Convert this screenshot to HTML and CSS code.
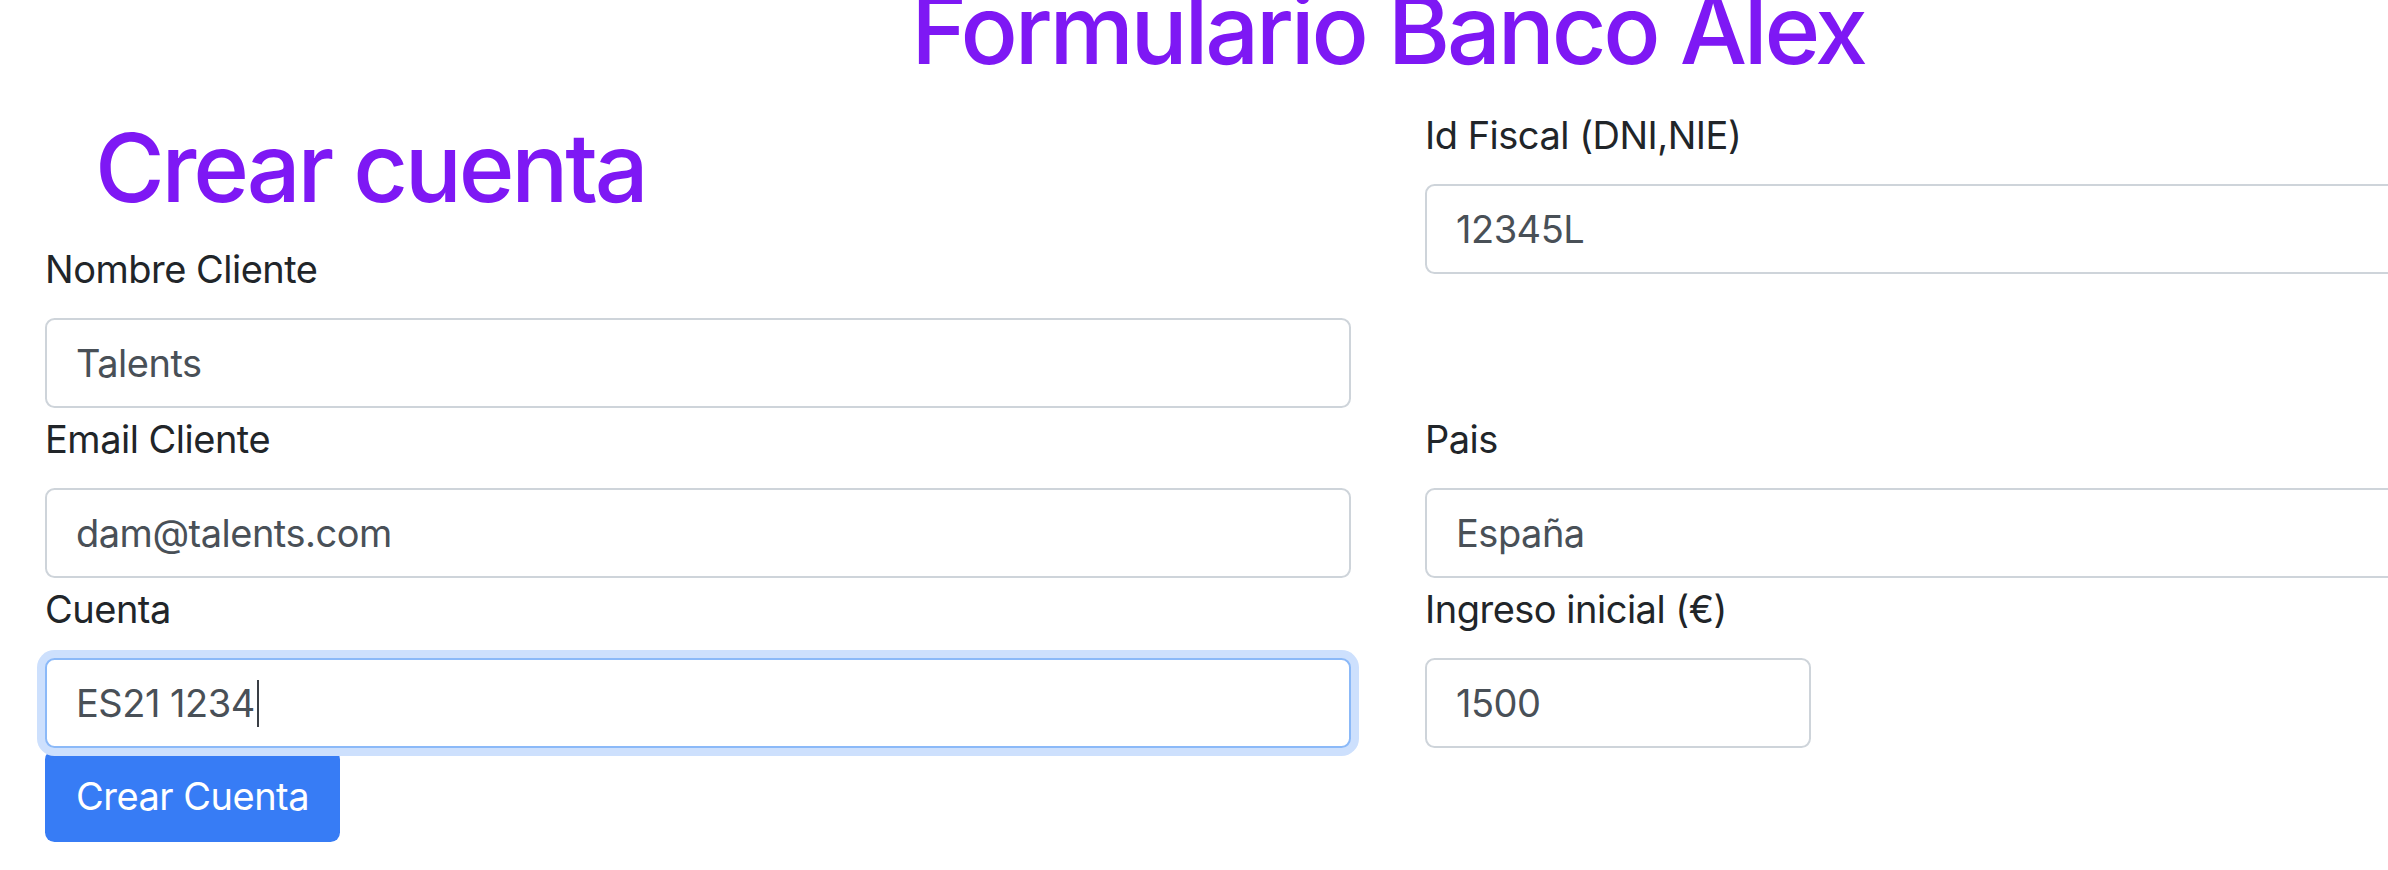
FILE: index.html
```html
<!DOCTYPE html>
<html lang="es">
<head>
<meta charset="utf-8">
<title>Formulario Banco Alex</title>
<link rel="stylesheet" href="styles.css">
</head>
<body>
<div class="page">
  <h1 class="page-title">Formulario Banco Alex</h1>
  <form class="form">
    <div class="col">
      <h1 class="section-title">Crear cuenta</h1>
      <div class="field">
        <label class="field-label" for="nombre">Nombre Cliente</label>
        <input class="field-input" id="nombre" type="text" value="Talents">
      </div>
    </div>
    <div class="col">
      <div class="field">
        <label class="field-label" for="idfiscal">Id Fiscal (DNI,NIE)</label>
        <input class="field-input" id="idfiscal" type="text" value="12345L">
      </div>
    </div>
    <div class="col">
      <div class="field">
        <label class="field-label" for="email">Email Cliente</label>
        <input class="field-input" id="email" type="text" value="dam@talents.com">
      </div>
    </div>
    <div class="col">
      <div class="field">
        <label class="field-label" for="pais">Pais</label>
        <input class="field-input" id="pais" type="text" value="España">
      </div>
    </div>
    <div class="col">
      <div class="field">
        <label class="field-label" for="cuenta">Cuenta</label>
        <div class="input-wrap">
          <input class="field-input is-focused" id="cuenta" type="text" value="ES21 1234">
          <span class="caret"></span>
        </div>
      </div>
      <button class="btn-primary" type="button">Crear Cuenta</button>
    </div>
    <div class="col">
      <div class="field">
        <label class="field-label" for="ingreso">Ingreso inicial (€)</label>
        <input class="field-input is-short" id="ingreso" type="text" inputmode="numeric" value="1500">
      </div>
    </div>
  </form>
</div>
</body>
</html>
```
FILE: styles.css
```css
html, body {
  margin: 0;
  padding: 0;
  background: #ffffff;
  overflow: hidden;
}

.page {
  width: 2776px;
  box-sizing: border-box;
  padding: 0 45px;
  font-family: Inter, "Liberation Sans", Arial, sans-serif;
  color: #212529;
  letter-spacing: -0.5px;
}

.page-title {
  margin: -27px 0 20px;
  font-size: 95px;
  line-height: 114px;
  font-weight: 500;
  text-align: center;
  color: #7e18f4;
  letter-spacing: -3.2px;
}

.form {
  display: grid;
  grid-template-columns: 1306px 1306px;
  column-gap: 74px;
  align-items: start;
}

.section-title {
  margin: 4px 0 16px 50px;
  font-size: 95px;
  line-height: 114px;
  font-weight: 500;
  color: #7e18f4;
  letter-spacing: -3.2px;
}

.field {
  margin-bottom: 3px;
}

.field-label {
  display: block;
  font-size: 38px;
  line-height: 57px;
  margin-bottom: 20px;
  color: #212529;
}

.input-wrap {
  position: relative;
}

.field-input {
  display: block;
  width: 100%;
  height: 90px;
  box-sizing: border-box;
  margin: 0;
  padding: 0 29px;
  border: 2px solid #ced4da;
  border-radius: 9.5px;
  background: #ffffff;
  font-family: inherit;
  font-size: 38px;
  letter-spacing: -0.5px;
  color: #495057;
  outline: none;
}

.field-input.is-focused {
  border-color: #8bb9f8;
  box-shadow: 0 0 0 8px #cde0fd;
}

.field-input.is-short {
  width: 386px;
}

.caret {
  position: absolute;
  left: 212px;
  top: 22px;
  width: 2px;
  height: 47px;
  background: #3a3f45;
}

.btn-primary {
  display: block;
  height: 92px;
  margin-top: -1px;
  padding: 0 31px;
  border: 0;
  border-radius: 9.5px;
  background: #377cf5;
  color: #ffffff;
  font-family: inherit;
  font-size: 38px;
  letter-spacing: -0.5px;
}
```
